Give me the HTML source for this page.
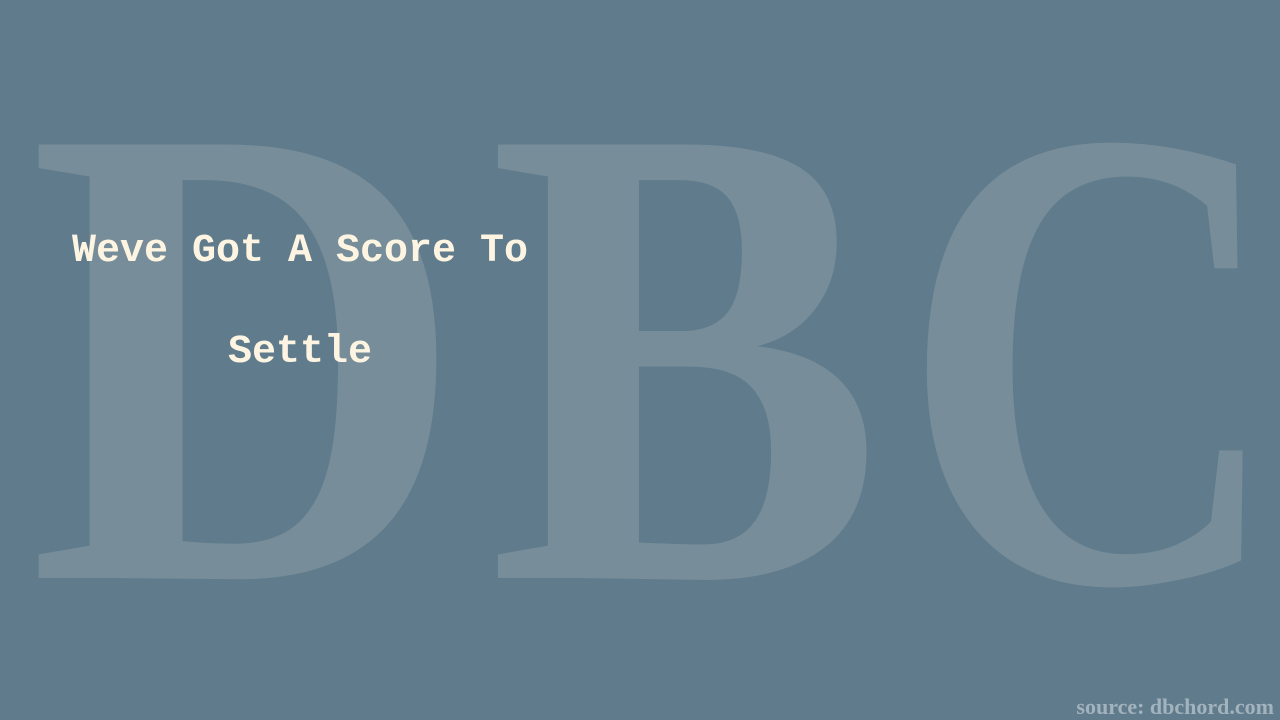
<!DOCTYPE html>
<html><head><meta charset="utf-8"><style>
html,body{margin:0;padding:0;}
body{width:1280px;height:720px;background:#5f7b8c;position:relative;overflow:hidden;}
svg{position:absolute;left:0;top:0;}
.t{position:absolute;left:0;width:600px;text-align:center;font-family:"Liberation Mono",monospace;font-weight:bold;font-size:40px;color:#fdf5e2;white-space:nowrap;}
.src{position:absolute;right:6px;bottom:0px;font-family:"Liberation Serif",serif;font-weight:bold;font-size:22px;color:#a3b3bd;}
</style></head><body>
<svg width="1280" height="720">
<g fill="#778d99" font-family="Liberation Serif, serif" font-weight="bold" font-size="662">
<text x="28" y="578" textLength="438" lengthAdjust="spacingAndGlyphs">D</text>
<text x="488" y="578" textLength="395" lengthAdjust="spacingAndGlyphs">B</text>
<text x="901" y="581" textLength="382" lengthAdjust="spacingAndGlyphs">C</text>
</g>
</svg>
<div class="t" style="top:229px;">Weve Got A Score To</div>
<div class="t" style="top:330px;">Settle</div>
<div class="src">source: dbchord.com</div>
</body></html>
